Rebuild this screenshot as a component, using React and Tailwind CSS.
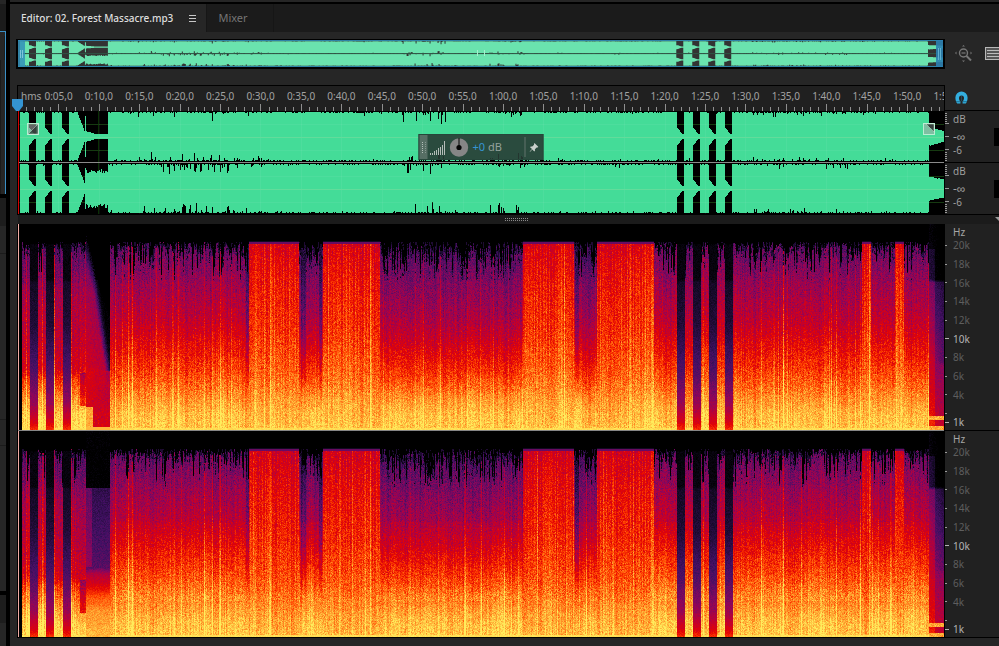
import { useEffect, useRef } from "react";

const WIDTH = 926;
const WAVE_HEIGHT = 103;
const SPEC_HEIGHT = 206;

// Everything below is in pixels from the start of the clip
const GAPS = [
  [11, 18],
  [27, 34],
  [44, 51],
  [659, 666],
  [675, 682],
  [691, 698],
  [707, 714],
];

const LOUD = [
  [230, 280],
  [304, 361],
  [505, 556],
  [579, 636],
  [844, 853],
  [877, 886],
];

const BUSY = [
  [120, 225, 9],
  [225, 245, 5],
  [385, 428, 11],
  [470, 505, 9],
  [735, 830, 5],
];

const TIMES = Array.from({ length: 23 }, (_, i) => {
  const s = (i + 1) * 5;
  return `${Math.floor(s / 60)}:${String(s % 60).padStart(2, "0")},0`;
});

const FREQUENCIES = ["20k", "18k", "16k", "14k", "12k", "10k", "8k", "6k", "4k"];

function random(seed) {
  let a = seed;
  return () => {
    a = (a + 0x6d2b79f5) | 0;
    let t = Math.imul(a ^ (a >>> 15), 1 | a);
    t = (t + Math.imul(t ^ (t >>> 7), 61 | t)) ^ t;
    return ((t ^ (t >>> 14)) >>> 0) / 4294967296;
  };
}

const inside = (ranges, x) => ranges.find(([a, b]) => x >= a && x < b);

// Amplitude of one column, 0 to 25
function amplitude(x, channel, rnd) {
  if (x < 2) return 0;
  const gap = inside(GAPS, x);
  if (gap) return Math.max(3, 9 - (x - gap[0]) * 1.2);
  if (x >= 60 && x < 67) return 22 - (x - 60) * 2.6;
  if (x === 67) return 21;
  if (x > 67 && x < 90) {
    return channel === 0 ? Math.max(3, 6 - (x - 67) * 0.3) : 16 + rnd() * 4;
  }
  if (x >= 911) return channel === 0 ? 9 - (x - 911) * 0.25 + rnd() : 12 - (x - 911) * 0.2 + rnd();
  const busy = inside(BUSY, x);
  const dip = busy
    ? rnd() < 0.35 ? rnd() ** 3 * busy[2] : 0
    : rnd() < 0.04 ? rnd() ** 2 * 3 : 0;
  return 25 - Math.round(rnd() * 0.7) - dip;
}

function wavePath() {
  const rnd = random(11);
  let d = "";
  for (let x = 0; x < WIDTH; x++) {
    for (let channel = 0; channel < 2; channel++) {
      const mid = channel === 0 ? 26 : 78;
      const up = Math.round(amplitude(x, channel, rnd));
      const down = Math.round(amplitude(x, channel, rnd));
      if (up + down > 0) d += `M${x} ${mid - up}h1V${mid + down - 1}h-1z`;
    }
  }
  return d;
}

const WAVE = wavePath();

const PALETTE = [
  [0, 0, 0, 0],
  [0.12, 18, 9, 34],
  [0.28, 66, 16, 100],
  [0.42, 136, 6, 94],
  [0.54, 190, 0, 50],
  [0.65, 226, 4, 4],
  [0.76, 255, 66, 0],
  [0.88, 255, 156, 44],
  [1, 255, 236, 92],
];

function heat(value) {
  const v = Math.min(1, Math.max(0, value));
  const i = Math.max(1, PALETTE.findIndex((p) => p[0] >= v));
  const a = PALETTE[i - 1];
  const b = PALETTE[i];
  const t = (v - a[0]) / (b[0] - a[0]);
  return [1, 2, 3].map((k) => a[k] + (b[k] - a[k]) * t);
}

function curve(points, y) {
  for (let i = 1; i < points.length; i++) {
    const [y0, v0] = points[i - 1];
    const [y1, v1] = points[i];
    if (y <= y1) return v0 + ((v1 - v0) * (y - y0)) / (y1 - y0);
  }
  return points[points.length - 1][1];
}

const NORMAL = [[0, 0.32], [20, 0.34], [40, 0.4], [60, 0.46], [95, 0.55], [120, 0.65], [150, 0.76], [175, 0.87], [190, 0.93], [206, 0.95]];
const HEAVY = [[0, 0.58], [20, 0.6], [60, 0.67], [110, 0.72], [150, 0.8], [180, 0.9], [206, 0.95]];
const INTRO = [[0, 0.28], [40, 0.36], [70, 0.48], [110, 0.54], [144, 0.6], [156, 0.74], [175, 0.87], [192, 0.96], [206, 0.98]];
const SILENT = [[0, 0.03], [55, 0.05], [58, 0.12], [100, 0.17], [150, 0.32], [180, 0.46], [198, 0.62], [206, 0.74]];
const TAIL = [[0, 0.0], [55, 0.03], [58, 0.24], [110, 0.36], [150, 0.46], [190, 0.54], [206, 0.6]];
const PAD = [[0, 0], [56, 0], [57, 0.22], [136, 0.32], [142, 0.5], [154, 0.62], [164, 0.76], [180, 0.87], [206, 0.92]];
const STREAKS = [7, 23, 35, 52, 96, 109, 113, 185, 193, 201, 251, 351, 685, 743, 765, 818, 842, 851];

function drawSpectrogram(canvas, channel) {
  const ctx = canvas.getContext("2d");
  const image = ctx.createImageData(WIDTH, SPEC_HEIGHT);
  const rnd = random(41 + channel * 7);
  let drift = 0;

  for (let x = 0; x < WIDTH; x++) {
    const gap = inside(GAPS, x - 1) || inside(GAPS, x);
    const loud = inside(LOUD, x);
    const intro = x < 67;
    const decay = x >= 67 && x < 91;
    const tail = x >= 911;
    const dark = (x > 226 && x < 230) || (x > 281 && x < 287) || (x > 299 && x < 303) || (x > 556 && x < 561);
    const calm = (x > 361 && x < 505) || (x > 556 && x < 579) || (x > 280 && x < 304);
    drift = drift * 0.8 + (rnd() - 0.5) * 0.03;
    const column = drift + (rnd() - 0.5) * 0.07 + (rnd() < 0.05 ? 0.08 : 0) + (STREAKS.includes(x) ? 0.13 : 0);
    const top = 17 + rnd() * 6 + rnd() ** (calm || dark ? 2 : 4) * 30;
    const reach = rnd() * 24 + (calm ? 12 : 6);
    let held = 0;

    for (let y = 0; y < SPEC_HEIGHT; y++) {
      if (rnd() < 0.4) held = rnd();
      const fuzz = rnd() + rnd() - 1;
      let v = 0;

      if (x < 3) {
        v = 0;
      } else if (gap) {
        v = curve(SILENT, y) + fuzz * 0.05;
        if (y < 20) v = 0;
      } else if (decay && channel === 0) {
        // The cymbal dies away from the high end down
        const edge = x < 76 ? 20 + (x - 67) * 4 : 60 + (x - 76) * 7;
        v = curve(INTRO, Math.min(y, 146)) - (x - 67) * 0.004;
        v -= Math.min(0.42, Math.max(0, edge + 20 - y) / 110);
        if (y < 56 && (x > 76 || y < edge - rnd() * 12)) v = 0;
        v += v > 0 ? fuzz * 0.07 : 0;
        if (y > 146) v = Math.max(v, 0.5 + (y - 146) * 0.002 + fuzz * 0.09);
        if (y > 182 && x < 74) v = 0.9 + fuzz * 0.06;
        if (y > 202) v = 0.92;
      } else if (decay) {
        v = curve(PAD, y) + fuzz * 0.06 + (x < 73 && y > 56 && y < 136 ? 0.12 : 0);
      } else if (tail) {
        v = curve(TAIL, y) - (x - 915) * 0.008 * (y < 140 ? 1 : 0.3) + fuzz * 0.06;
        if (x < 917 && y > 24) v += 0.12;
        if (y > 191 && y < 196) v = 0.9 + fuzz * 0.08;
        if (y > 201) v = 0.9 + fuzz * 0.08;
      } else {
        v = curve(loud ? HEAVY : intro ? INTRO : NORMAL, y) + column;
        v += fuzz * (y > 170 ? 0.09 : 0.11);
        const high = Math.min(1, Math.max(0, (175 - y) / 60));
        if (calm) v -= high * 0.06;
        if (dark) v -= high * 0.13;
        if (loud && x % 3 === 0) v += high * 0.05;
        if (intro && x > 60 && y > 148 && y < 182) v -= 0.2;
        if (channel === 1) v += loud ? -0.03 : x > 91 && y > 90 && y < 170 ? 0.03 : 0;
        if (!loud) {
          if (y < top) v = held > 0.85 && y > 17 ? 0.16 : 0;
          else if (y < top + reach && y < 56 && held > 0.35 + (y - top) / reach) v = 0.06 + rnd() * 0.2;
        }
        if (loud && y < 20) v = y < 17 ? 0 : y < 18 ? 0.12 : 0.36;
        if (y > 203) v = 0.98 + fuzz * 0.03;
      }

      const [r, g, b] = heat(v);
      const i = (y * WIDTH + x) * 4;
      image.data[i] = r;
      image.data[i + 1] = g;
      image.data[i + 2] = b;
      image.data[i + 3] = 255;
    }
  }
  ctx.putImageData(image, 0, 0);
}

function Spectrogram({ channel }) {
  const ref = useRef(null);

  useEffect(() => {
    drawSpectrogram(ref.current, channel);
  }, [channel]);

  return (
    <canvas
      ref={ref}
      width={WIDTH}
      height={SPEC_HEIGHT}
      className="block h-[206px] w-full border-l border-[#f0aca4] [image-rendering:pixelated]"
    />
  );
}

function Overview() {
  return (
    <div className="relative flex-1 border-2 border-t border-black">
      <svg
        className="block h-[27px] w-full border-y border-[#2f82a8] bg-[#333333]"
        viewBox={`0 0 ${WIDTH} ${WAVE_HEIGHT}`}
        preserveAspectRatio="none"
      >
        <path d={WAVE} fill="#6ae3ae" />
        <rect y="50" width={WIDTH} height="4" fill="#2f5746" />
      </svg>
      <button aria-label="View start" className="absolute inset-y-0 left-0 flex w-[7px] items-center justify-center gap-px bg-[#318fb8]/85">
        <span className="h-2 w-px bg-[#7fc4dc]" />
        <span className="h-2 w-px bg-[#7fc4dc]" />
      </button>
      <button aria-label="View end" className="absolute inset-y-0 right-0 flex w-[7px] items-center justify-center gap-px bg-[#2b7fb0]/90">
        <span className="h-3 w-px bg-[#5fb0d0]" />
        <span className="h-3 w-px bg-[#5fb0d0]" />
      </button>
      <span className="absolute top-2.5 left-1/2 h-1.5 w-2 -translate-x-1/2 border-x border-[#a4f0cd]" />
    </div>
  );
}

function TimeRuler() {
  return (
    <div className="relative border-t border-r border-l border-black bg-[#202020]">
      <div className="flex h-[25px] overflow-hidden pt-1 text-[10px] leading-3 text-[#a2a2a2]">
        <span className="w-[2.2%] shrink-0 pl-[3px]">hms</span>
        {TIMES.map((time) => (
          <span key={time} className="w-[4.364%] shrink-0 text-center">
            {time}
          </span>
        ))}
      </div>
      <svg
        className="absolute bottom-0 left-0 h-[7px] w-full"
        viewBox={`0 0 ${WIDTH} 7`}
        preserveAspectRatio="none"
        shapeRendering="crispEdges"
      >
        {Array.from({ length: 115 }, (_, i) => (
          <rect key={i} x={Math.round(i * 8.082)} y={i % 5 === 0 ? 0 : 3} width="1" height="7" fill="#8f8f8f" />
        ))}
      </svg>
      <svg className="absolute bottom-0 -left-1.5 h-3 w-[11px]" viewBox="0 0 11 12">
        <path d="M0 0h11v7L7 12H4L0 7z" fill="#3494d2" />
      </svg>
    </div>
  );
}

function FadeHandle({ label, className, d }) {
  return (
    <button aria-label={label} className={`absolute top-3 h-3 w-3 ${className}`}>
      <svg viewBox="0 0 12 12" className="block h-3 w-3">
        <rect x=".5" y=".5" width="11" height="11" fill="#a5aba8" fillOpacity=".6" stroke="#b9edd2" />
        <path d={d} fill="#24302b" fillOpacity=".7" />
        <path d={d} fill="none" stroke="#e2f5ea" strokeWidth=".4" />
      </svg>
    </button>
  );
}

function VolumeHud() {
  return (
    <div className="absolute top-[23px] left-1/2 flex h-[26px] w-[125px] -translate-x-1/2 items-center border border-[#26463a] bg-[#283b34]/90">
      <div className="flex h-full w-2 items-center justify-center bg-[#566e64]">
        <svg width="4" height="11" viewBox="0 0 4 11" shapeRendering="crispEdges">
          <path d="M.5 0v11M3.5 0v11" stroke="#b4c0ba" strokeDasharray="1 1" />
        </svg>
      </div>
      <svg className="ml-0.5" width="16" height="15" viewBox="0 0 16 15" shapeRendering="crispEdges">
        {[2, 2, 4, 5, 7, 8, 10, 14].map((h, i) => (
          <rect key={i} x={i * 2} y={15 - h} width="1" height={h} fill="#b4bcb8" />
        ))}
      </svg>
      <button aria-label="Volume" className="ml-1">
        <svg width="19" height="19" viewBox="0 0 19 19" className="block">
          <circle cx="9.5" cy="9.5" r="9.2" fill="#868686" />
          <circle cx="9.5" cy="9.5" r="2.6" fill="#050505" />
          <path d="M9.5 0v10" stroke="#050505" />
        </svg>
      </button>
      <button className="ml-1 text-[11px] leading-4 whitespace-nowrap text-[#94a19b]">
        <span className="text-[#3595d4]">+0</span> dB
      </button>
      <button aria-label="Pin" className="ml-auto flex h-5 w-[18px] items-center justify-center border-l border-[#63756d]">
        <svg width="9" height="9" viewBox="0 0 10 10">
          <path d="M5.5 0 10 4.5 8.8 5 8 4.9 6 7l.1 1.6-.8.8-2.2-2.2L.4 9.9 0 9.6l2.8-2.8L.6 4.6l.8-.8L3 4l2.1-2L5 1.2z" fill="#c8cfcb" />
        </svg>
      </button>
    </div>
  );
}

function WaveEditor() {
  return (
    <div className="relative border-x border-b border-black bg-black">
      <svg
        className="block h-[103px] w-full"
        viewBox={`0 0 ${WIDTH} ${WAVE_HEIGHT}`}
        preserveAspectRatio="none"
        shapeRendering="crispEdges"
      >
        <path d="M0 13.5H926M0 39.5H926M0 65.5H926M0 91.5H926M80.5 0V103" stroke="#0a3005" />
        <path d={WAVE} fill="#44dc98" />
        {Array.from({ length: 23 }, (_, i) => (
          <rect key={i} x={Math.round(i * 40.41)} width="1" height="103" fill="#ffffff" opacity=".05" />
        ))}
        <path d="M2 13.5H926M2 39.5H926M2 65.5H926M2 91.5H926" stroke="#ffffff" strokeOpacity=".05" />
        <path d="M2 26H926M2 78H926" stroke="#62dc9b" />
        <rect y="51" width={WIDTH} height="1" fill="#8a8a8a" />
        <rect width="1" height="103" fill="#d40000" />
      </svg>
      <FadeHandle label="Fade in" className="left-[9px]" d="M1 11 11 1v10z" />
      <FadeHandle label="Fade out" className="right-[9px]" d="M3 1h8v8z" />
      <VolumeHud />
    </div>
  );
}

function DecibelScale() {
  return (
    <div className="flex h-[52px] border-b border-black">
      <svg width="5" height="51" viewBox="0 0 5 51" shapeRendering="crispEdges">
        <path d="M0 2.5h2M0 4.5h2M0 6.5h2M0 8.5h2M0 10.5h2M0 12.5h4M0 25.5h4M0 38.5h4M0 41.5h2M0 43.5h2M0 45.5h2M0 47.5h2M0 49.5h2" stroke="#9a9a9a" />
      </svg>
      <div className="flex flex-col pl-[3px] text-[10px] text-[#9f9f9f]">
        <span className="h-[17px] leading-[17px]">dB</span>
        <span className="h-[17px] text-[12px] leading-[17px]">-∞</span>
        <span className="h-2.5 leading-[10px]">-6</span>
      </div>
      <span className="mt-[17px] ml-auto h-[18px] w-[5px] bg-black" />
    </div>
  );
}

function FrequencyScale() {
  return (
    <div className="flex h-[206px] flex-col bg-[#212121] text-[10px] leading-3 text-[#5e5e5e]">
      <span className="h-3 pt-0.5 pl-2 text-[#a6a6a6]">Hz</span>
      {FREQUENCIES.map((label) => (
        <div key={label} className={label === "10k" ? "flex flex-1 items-center text-[#b4b4b4]" : "flex flex-1 items-center"}>
          <span className={label === "10k" ? "h-px w-1 bg-[#b4b4b4]" : "mr-0.5 h-px w-0.5 bg-[#9a9a9a]"} />
          <span className="pl-1">{label}</span>
        </div>
      ))}
      <div className="flex h-2.5 items-end">
        <span className="h-px w-0.5 bg-[#9a9a9a]" />
      </div>
      <div className="flex h-4 items-center text-[#b4b4b4]">
        <span className="h-px w-1 bg-[#b4b4b4]" />
        <span className="pl-1">1k</span>
      </div>
    </div>
  );
}

function ZoomIcon() {
  return (
    <svg width="18" height="18" viewBox="0 0 18 18">
      <circle cx="8.5" cy="8" r="4" fill="none" stroke="#777777" strokeWidth="1.4" />
      <path d="M6.5 8h4" stroke="#777777" strokeWidth="1.2" />
      <path d="m11.5 11 4.500 4.500" stroke="#777777" strokeWidth="2" />
      <path d="m0 8 1.500-1.500v3zM17 8l-1.500-1.500v3zM8.500 0l1.500 1.500h-3zM8.500 17l1.500-1.500h-3z" fill="#777777" />
    </svg>
  );
}

function MagnetIcon() {
  return (
    <svg width="13" height="13" viewBox="0 0 13 13" className="block">
      <path
        d="M2.200 12.500C.9 10.800.4 9 .4 6.500a6.100 6.100 0 0 1 12.200 0c0 2.500-.5 4.300-1.800 6H7.600V10.500C8.600 9.500 9 8.200 9 7a2.500 2.500 0 0 0-5 0c0 1.200.4 2.500 1.400 3.500v2z"
        fill="#33aede"
      />
      <path d="M1 10.700h4.500M7.500 10.700H12" stroke="#1a5f7c" strokeWidth=".8" />
      <path d="M6.500 5v5" stroke="#1c4a5e" />
    </svg>
  );
}

function Sidebar() {
  return (
    <div className="flex w-2.5 shrink-0 flex-col border-r-4 border-black bg-[#262626]">
      <div className="mt-1 h-[27px] bg-[#1b1b1b]" />
      <div className="h-[163px] border-t border-r border-[#3b8fc6] pt-1">
        <div className="h-6 border-r border-[#1d1d1d]" />
        <div className="h-[134px] w-px bg-[#1b1b1b]" />
      </div>
      <div className="h-1 bg-black" />
      <div className="h-7 bg-[#1d1d1d]" />
      <div className="h-7 border-b border-[#1b1b1b]" />
      <div className="h-[166px] border-b border-[#1b1b1b]" />
      <div className="h-[26px] border-b border-[#1b1b1b]" />
      <div className="h-[145px]" />
      <div className="h-1 bg-black" />
      <div className="h-7 bg-[#1d1d1d]" />
    </div>
  );
}

export default function App() {
  return (
    <div className="flex min-h-screen flex-col bg-[#262626] font-['Noto_Sans',sans-serif]">
      <div className="h-1 border-b-2 border-black" />
      <div className="-mt-1 flex flex-1">
        <Sidebar />

        <main className="mt-1 min-w-0 flex-1">
          {/* Panel tabs */}
          <nav className="flex h-7 bg-[#1b1b1b] text-[11px] leading-7">
            <div className="flex w-[196px] items-center justify-between bg-[#262626] pr-2 pl-[11px]">
              <button className="text-[10px] font-medium whitespace-nowrap text-[#dedede]">
                Editor: 02. Forest Massacre.mp3
              </button>
              <button aria-label="Panel menu" className="pr-0.5">
                <svg width="7" height="7" viewBox="0 0 7 7" shapeRendering="crispEdges">
                  <path d="M0 .5h7M0 3.5h7M0 6.5h7" stroke="#c8c8c8" />
                </svg>
              </button>
            </div>
            <button className="w-[68px] border-r border-l border-[#161616] pr-3.5 text-center text-[#757575]">
              Mixer
            </button>
          </nav>

          {/* Whole file overview */}
          <div className="flex pt-[7px] pl-1.5">
            <Overview />
            <div className="flex w-[54px] shrink-0 items-center justify-between pl-2.5">
              <button aria-label="Zoom out full">
                <ZoomIcon />
              </button>
              <button aria-label="Show list">
                <svg width="14" height="14" viewBox="0 0 14 14" shapeRendering="crispEdges" className="block">
                  <path d="M14 .5H.5v12H14" fill="#565656" stroke="#b8b8b8" />
                  <path d="M2 3.5h12M2 6.5h12M2 9.5h12" stroke="#bcbcbc" />
                </svg>
              </button>
            </div>
          </div>

          {/* Waveform */}
          <div className="mt-4 flex pl-[7px]">
            <div className="min-w-0 flex-1">
              <TimeRuler />
              <WaveEditor />
            </div>
            <div className="w-[54px] shrink-0 bg-[#212121]">
              <div className="flex h-[26px] items-center border-b border-black bg-[#262626] pl-2.5">
                <button aria-label="Snapping">
                  <MagnetIcon />
                </button>
              </div>
              <DecibelScale />
              <DecibelScale />
            </div>
          </div>

          {/* Splitter */}
          <div className="relative ml-2 flex h-[9px] items-center justify-center bg-[#1b1b1b] pl-4">
            <svg width="23" height="3" viewBox="0 0 23 3" shapeRendering="crispEdges">
              <path d="M0 .5h23M0 2.5h23" stroke="#8a8a8a" strokeDasharray="1 1" />
            </svg>
            <svg className="absolute top-0.5 right-0" width="4" height="4" viewBox="0 0 4 4">
              <path d="M0 0h4v4z" fill="#9a9a9a" />
            </svg>
          </div>

          {/* Spectral display */}
          <div className="flex pl-[7px]">
            <div className="min-w-0 flex-1 border-x border-b border-black">
              <Spectrogram channel={0} />
              <div className="h-px bg-[#858585]" />
              <Spectrogram channel={1} />
            </div>
            <div className="w-[54px] shrink-0 border-b border-black">
              <FrequencyScale />
              <div className="h-px bg-black" />
              <FrequencyScale />
            </div>
          </div>
        </main>
      </div>
    </div>
  );
}
